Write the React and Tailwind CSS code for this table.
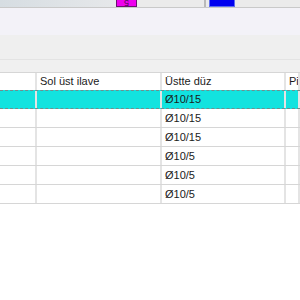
const rows = [
  { val: 'Ø10/15', active: true },
  { val: 'Ø10/15' },
  { val: 'Ø10/15' },
  { val: 'Ø10/5' },
  { val: 'Ø10/5' },
  { val: 'Ø10/5' },
]

function Cell({ children, className = '' }) {
  return (
    <div className={`flex items-center overflow-hidden whitespace-nowrap border-r-2 border-[#e4e4e4] pl-[3px] ${className}`}>
      {children}
    </div>
  )
}

export default function App() {
  return (
    <div className="h-[300px] w-[300px] overflow-hidden bg-white text-[11px] text-[#1b1b1b] [font-family:'Liberation_Sans',Arial,sans-serif]">
      {/* top toolbar strip */}
      <div className="flex h-[8px] border-b border-[#c9c9c9]">
        <div className="w-[116px] bg-gradient-to-r from-[#d6dde2] to-[#e6e8ea]" />
        <div className="flex w-[21px] items-start justify-center overflow-hidden border border-t-0 border-[#6a1070] bg-[#ee00ee]">
          <span className="mt-[-2px] rotate-180 text-[9px] leading-[9px] text-[#55105a]">5</span>
        </div>
        <div className="w-[67px] bg-[#ebebeb]" />
        <div className="w-[2px] border-x border-[#b9b9b9] bg-[#e2e2e2]" />
        <div className="w-[3px] bg-[#ebebeb]" />
        <div className="w-[26px] border border-t-0 border-[#5d6cf0] bg-[#0000f0]" />
        <div className="flex-1 bg-[#ebebeb]" />
      </div>

      <div className="h-[27px] bg-[#f3f2f8]" />
      <div className="h-[25px] border-b border-[#e3e3e3] bg-[#efefef]" />
      <div className="h-[12px] bg-[#f0f0f0]" />

      {/* grid */}
      <div className="border-t border-[#d6d6d6]">
        <div className="grid h-[17px] grid-cols-[37px_125px_124px_1fr] bg-white">
          <Cell />
          <Cell>Sol üst ilave</Cell>
          <Cell>Üstte düz</Cell>
          <Cell className="border-r-0">Pil</Cell>
        </div>
        {rows.map((r, i) => (
          <div
            key={i}
            className={`grid h-[19px] grid-cols-[37px_125px_124px_1fr] ${
              r.active
                ? 'border-y border-dashed border-[#6f8f8f] bg-[#12e3df]'
                : 'border-b border-[#d6d6d6] bg-white'
            }`}
          >
            <Cell className={r.active ? 'border-[#3fd0cc]' : ''} />
            <Cell className={r.active ? 'border-[#3fd0cc]' : ''} />
            <Cell className={r.active ? 'border-[#3fd0cc]' : ''}>{r.val}</Cell>
            <Cell className="border-r-0" />
          </div>
        ))}
      </div>
    </div>
  )
}
